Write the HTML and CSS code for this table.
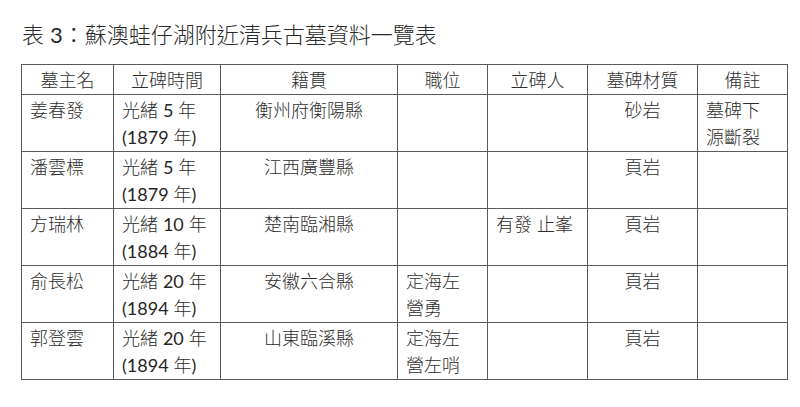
FILE: index.html
```html
<!DOCTYPE html>
<html lang="zh-Hant">
<head>
<meta charset="utf-8">
<link rel="stylesheet" href="styles.css">
</head>
<body>
<div class="page">
  <h1 class="title">表 <span class="num">3</span>：蘇澳蛙仔湖附近清兵古墓資料一覽表</h1>
  <table class="grid">
    <colgroup>
      <col class="c1"><col class="c2"><col class="c3"><col class="c4"><col class="c5"><col class="c6"><col class="c7">
    </colgroup>
    <thead>
      <tr class="head">
        <th>墓主名</th><th>立碑時間</th><th>籍貫</th><th>職位</th><th>立碑人</th><th>墓碑材質</th><th>備註</th>
      </tr>
    </thead>
    <tbody>
      <tr>
        <td>姜春發</td><td>光緒 <span class="num">5</span> 年<br><span class="num">(1879</span> 年<span class="num">)</span></td><td class="center">衡州府衡陽縣</td><td></td><td></td><td class="center">砂岩</td><td>墓碑下<br>源斷裂</td>
      </tr>
      <tr>
        <td>潘雲標</td><td>光緒 <span class="num">5</span> 年<br><span class="num">(1879</span> 年<span class="num">)</span></td><td class="center">江西廣豐縣</td><td></td><td></td><td class="center">頁岩</td><td></td>
      </tr>
      <tr>
        <td>方瑞林</td><td>光緒 <span class="num">10</span> 年<br><span class="num">(1884</span> 年<span class="num">)</span></td><td class="center">楚南臨湘縣</td><td></td><td>有發 止峯</td><td class="center">頁岩</td><td></td>
      </tr>
      <tr>
        <td>俞長松</td><td>光緒 <span class="num">20</span> 年<br><span class="num">(1894</span> 年<span class="num">)</span></td><td class="center">安徽六合縣</td><td>定海左<br>營勇</td><td></td><td class="center">頁岩</td><td></td>
      </tr>
      <tr>
        <td>郭登雲</td><td>光緒 <span class="num">20</span> 年<br><span class="num">(1894</span> 年<span class="num">)</span></td><td class="center">山東臨溪縣</td><td>定海左<br>營左哨</td><td></td><td class="center">頁岩</td><td></td>
      </tr>
    </tbody>
  </table>
</div>
</body>
</html>
```
FILE: styles.css
```css
html, body {
  margin: 0;
  padding: 0;
  background: #ffffff;
}
body {
  font-family: Lato, "Noto Sans CJK TC", sans-serif;
  color: #2e2e2e;
}
.page {
  padding: 20px 0 0 21px;
}
.title {
  margin: 0 0 14px 1px;
  font-size: 22px;
  font-weight: 300;
  line-height: 30px;
  color: #2a2a2a;
}
.num {
  font-weight: 400;
  color: #262626;
}
.grid {
  border-collapse: collapse;
  table-layout: fixed;
  width: 766px;
  font-size: 18px;
}
.c1 { width: 92px; }
.c2 { width: 107px; }
.c3 { width: 177px; }
.c4 { width: 90px; }
.c5 { width: 100px; }
.c6 { width: 110px; }
.c7 { width: 90px; }
.grid th, .grid td {
  border: 1px solid #5a5a5a;
  padding: 2px 0 0 8px;
  line-height: 27px;
  vertical-align: top;
  text-align: left;
  font-weight: 300;
  white-space: nowrap;
  overflow: hidden;
}
.grid th {
  text-align: center;
  padding-left: 0;
}
.grid .center {
  text-align: center;
  padding-left: 0;
}
.head { height: 30px; }
tbody tr { height: 57px; }
```
